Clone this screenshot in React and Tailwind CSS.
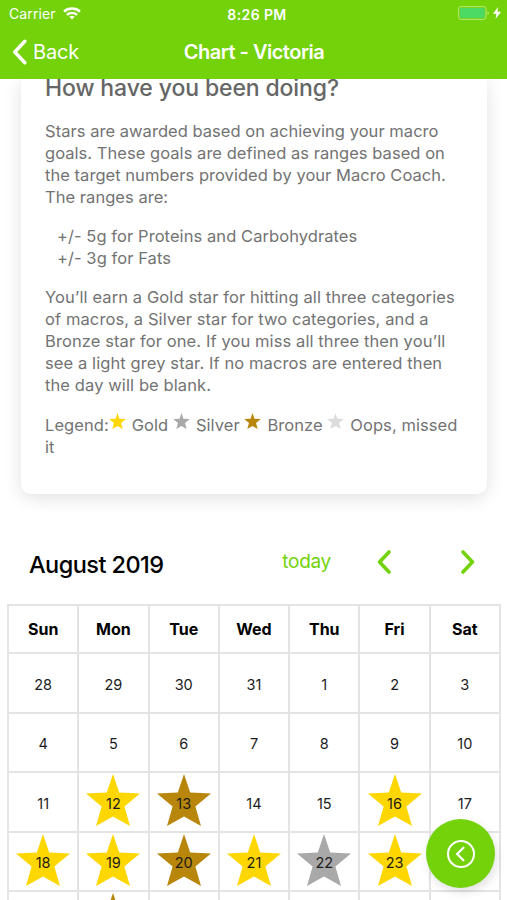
import React from 'react';

const DAYS = ['Sun', 'Mon', 'Tue', 'Wed', 'Thu', 'Fri', 'Sat'];

const WEEKS = [
  [28, 29, 30, 31, 1, 2, 3],
  [4, 5, 6, 7, 8, 9, 10],
  [11, 12, 13, 14, 15, 16, 17],
  [18, 19, 20, 21, 22, 23, 24],
  [25, 26, 27, 28, 29, 30, 31],
];

// keyed by "week-day"
const STARS = {
  '2-1': 'gold',
  '2-2': 'bronze',
  '2-5': 'gold',
  '3-0': 'gold',
  '3-1': 'gold',
  '3-2': 'bronze',
  '3-3': 'gold',
  '3-4': 'silver',
  '3-5': 'gold',
  '4-1': 'bronze',
};

const STAR_COLORS = {
  gold: 'text-[#ffd700]',
  silver: 'text-[#a9a9a9]',
  bronze: 'text-[#b8860b]',
  missed: 'text-[#dcdcdc]',
};

function Star({ kind, className }) {
  return (
    <svg viewBox="0 0 54 52" fill="currentColor" className={`${STAR_COLORS[kind]} ${className}`}>
      <path d="M27 0 L33.2 18.4 L54 19.4 L38.4 32.6 L44 52 L27 42.4 L10 52 L15.6 32.6 L0 19.4 L20.8 18.4 Z" />
    </svg>
  );
}

function LegendStar({ kind }) {
  return <Star kind={kind} className="-mt-2 mr-[1.2px] mb-0.5 inline h-4 w-[17px] align-baseline" />;
}

function Chevron({ direction, className, stroke = 4 }) {
  return (
    <svg
      viewBox="0 0 14 24"
      fill="none"
      stroke="currentColor"
      strokeWidth={stroke}
      strokeLinecap="round"
      strokeLinejoin="round"
      className={className}
    >
      <path d={direction === 'left' ? 'M12 2 L2.6 12 L12 22' : 'M2 2 L11.4 12 L2 22'} />
    </svg>
  );
}

function StatusBar() {
  return (
    <div className="grid h-7 grid-cols-3 items-center pl-[9px] pr-1.5 text-[14px]">
      <div className="flex items-center gap-[7px]">
        <span className="-mt-px tracking-[0.1px]">Carrier</span>
        <svg viewBox="0 0 18 13" className="-mt-0.5 h-[13px] w-[18px]" fill="none" stroke="currentColor" strokeWidth="2.5">
          <path d="M1 4.6 C5.5 0.6 12.5 0.6 17 4.6" />
          <path d="M3.9 7.9 C6.9 5.2 11.1 5.2 14.1 7.9" />
          <path d="M6.3 9.8 C7.9 8.4 10.1 8.4 11.7 9.8 L9 12.6 Z" fill="currentColor" stroke="none" />
        </svg>
      </div>
      <span className="pl-1 text-center text-[14px] font-semibold tracking-[0.4px] whitespace-nowrap">8:26 PM</span>
      <div className="-mt-0.5 flex items-center justify-end gap-[3px]">
        <svg viewBox="0 0 32 14" className="h-3.5 w-8">
          <rect x="0.6" y="0.6" width="27.4" height="12.8" rx="2.5" fill="none" stroke="#b5e87a" strokeWidth="1" />
          <rect x="2" y="2" width="24.6" height="10" rx="1.2" fill="#4cd964" />
          <path d="M29.5 5 C31.3 5.8 31.3 8.2 29.5 9 Z" fill="#b5e87a" />
        </svg>
        <svg viewBox="0 0 8 12" className="h-3 w-2" fill="currentColor">
          <path d="M5 0 L0 6.8 H3.4 L2.6 12 L8 4.8 H4.6 Z" />
        </svg>
      </div>
    </div>
  );
}

function Header() {
  return (
    <header className="relative z-10 h-[79px] shrink-0 bg-[#73d20a] text-white">
      <StatusBar />
      <div className="grid h-12 grid-cols-[1fr_auto_1fr] items-center">
        <button className="flex items-center gap-1.5 pl-3 text-[20px] tracking-[-0.15px]">
          <Chevron direction="left" className="h-[26px] w-[15px]" stroke={3.2} />
          Back
        </button>
        <h1 className="pl-px text-[20px] font-semibold tracking-[-0.5px]">Chart - Victoria</h1>
        <span />
      </div>
    </header>
  );
}

function InfoCard() {
  return (
    <section className="mr-5 ml-[21px] h-[415px] rounded-b-[10px] bg-white px-6 text-[16.5px] leading-[22px] tracking-[0.07px] whitespace-nowrap text-[#737373] shadow-[0_4px_18px_rgba(0,0,0,0.12)]">
      <h2 className="text-[23px] leading-[18px] font-medium tracking-[-0.12px] text-[#666]">
        How have you been doing?
      </h2>
      <p className="mt-[23px] tracking-[0.04px]">
        Stars are awarded based on achieving your macro<br />
        goals. These goals are defined as ranges based on<br />
        the target numbers provided by your Macro Coach.<br />
        The ranges are:
      </p>
      <ul className="mt-[17px] pl-3">
        <li>+/- 5g for Proteins and Carbohydrates</li>
        <li>+/- 3g for Fats</li>
      </ul>
      <p className="mt-[17px] tracking-[0.1px]">
        You’ll earn a Gold star for hitting all three categories<br />
        of macros, a Silver star for two categories, and a<br />
        Bronze star for one. If you miss all three then you’ll<br />
        see a light grey star. If no macros are entered then<br />
        the day will be blank.
      </p>
      <p className="mt-[18px]">
        Legend:
        <LegendStar kind="gold" /> Gold{' '}
        <LegendStar kind="silver" /> Silver{' '}
        <LegendStar kind="bronze" /> Bronze{' '}
        <LegendStar kind="missed" /> Oops, missed<br />
        it
      </p>
    </section>
  );
}

function CalendarToolbar() {
  return (
    <div className="mt-[43px] flex h-[50px] items-center pl-[29px] pr-[31px]">
      <h2 className="flex-1 pt-1.5 text-[23.5px] font-medium tracking-[-0.55px] text-black">August 2019</h2>
      <div className="flex items-center text-[#73d20a]">
        <button className="pt-px text-[19px] tracking-[-0.3px]">today</button>
        <Chevron direction="left" className="ml-[46px] h-6 w-3.5" stroke={3.6} />
        <Chevron direction="right" className="ml-[70px] mr-px h-6 w-3.5" stroke={3.6} />
      </div>
    </div>
  );
}

function Calendar() {
  return (
    <div className="mr-1.5 ml-[7px] mt-[17px] border-t-2 border-l-2 border-[#e4e4e4] text-black">
      <div className="grid h-12 grid-cols-7">
        {DAYS.map((day) => (
          <div key={day} className="flex items-center justify-center border-r-2 border-b-2 border-[#e4e4e4] text-[16px] font-bold">
            {day}
          </div>
        ))}
      </div>
      {WEEKS.map((week, w) => (
        <div key={w} className="grid h-[59.5px] grid-cols-7">
          {week.map((date, d) => {
            const star = STARS[`${w}-${d}`];
            return (
              <div key={d} className="relative flex items-center justify-center border-r-2 border-b-2 border-[#e4e4e4] text-[14.5px]">
                {star && <Star kind={star} className="absolute top-px h-[52px] w-[54px]" />}
                <span className="relative pt-1 text-[#1c1c1c]">{date}</span>
              </div>
            );
          })}
        </div>
      ))}
    </div>
  );
}

export default function App() {
  return (
    <div className="relative flex h-[900px] w-[507px] flex-col overflow-hidden bg-white font-['Inter','Liberation_Sans',sans-serif]">
      <Header />
      <main className="min-h-0 flex-1 overflow-hidden">
        <InfoCard />
        <CalendarToolbar />
        <Calendar />
      </main>
      <button className="absolute right-3 bottom-3 flex size-[69px] items-center justify-center rounded-full bg-[#73d20a] text-white shadow-[2px_4px_10px_rgba(0,0,0,0.12)]">
        <svg viewBox="0 0 28 28" className="size-7" fill="none" stroke="currentColor" strokeWidth="2">
          <circle cx="14" cy="14" r="13" />
          <path d="M16.4 7.8 L10.2 14 L16.4 20.2" strokeWidth="2.3" strokeLinecap="round" />
        </svg>
      </button>
    </div>
  );
}
